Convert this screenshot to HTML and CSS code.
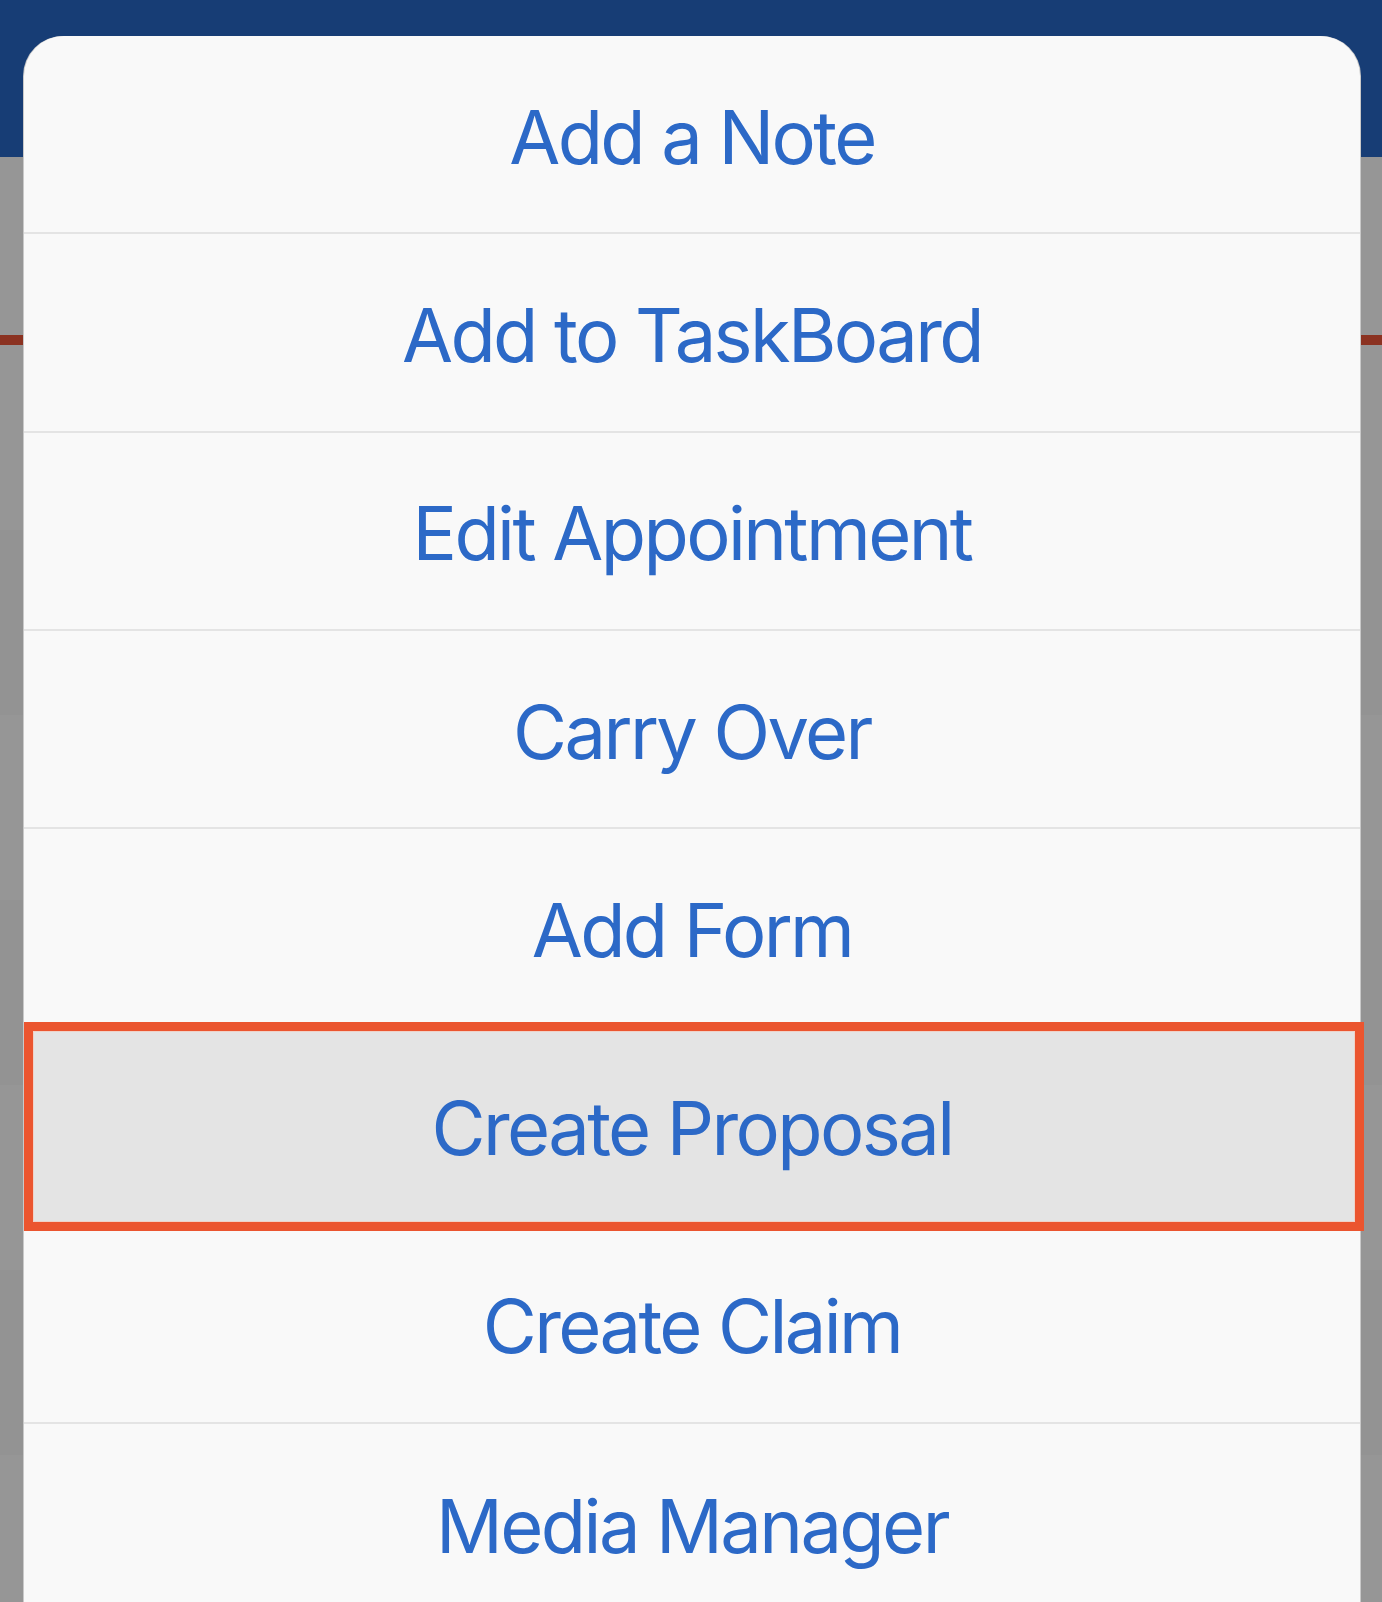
FILE: index.html
```html
<!DOCTYPE html>
<html lang="en">
<head>
<meta charset="utf-8">
<title>Actions</title>
<link rel="stylesheet" href="styles.css">
</head>
<body>
<div class="screen">
  <div class="backdrop">
    <div class="bd-header"></div>
    <div class="bd-bar"></div>
    <div class="bd-accent"></div>
    <div class="bd-row bd-a"></div>
    <div class="bd-row bd-b"></div>
    <div class="bd-row bd-a"></div>
    <div class="bd-row bd-b"></div>
    <div class="bd-row bd-a"></div>
    <div class="bd-row bd-b"></div>
    <div class="bd-row bd-a"></div>
  </div>
  <div class="sheet">
    <div class="action">Add a Note</div>
    <div class="action">Add to TaskBoard</div>
    <div class="action">Edit Appointment</div>
    <div class="action">Carry Over</div>
    <div class="action">Add Form</div>
    <div class="action action-selected"><span class="highlight"></span><span class="label">Create Proposal</span></div>
    <div class="action">Create Claim</div>
    <div class="action">Media Manager</div>
  </div>
</div>
</body>
</html>
```
FILE: styles.css
```css
html, body {
  margin: 0;
  padding: 0;
}
body {
  width: 1382px;
  height: 1602px;
  overflow: hidden;
  background: #959595;
  font-family: "Inter", "Liberation Sans", sans-serif;
}
.screen {
  position: relative;
  width: 1382px;
  height: 1602px;
  overflow: hidden;
}
.backdrop {
  display: flex;
  flex-direction: column;
}
.bd-header {
  height: 157px;
  background: #173d75;
}
.bd-bar {
  height: 178px;
  background: #969696;
}
.bd-accent {
  height: 10px;
  background: #8b3221;
}
.bd-row {
  height: 185px;
}
.bd-a { background: #969696; }
.bd-b { background: #939393; }

.sheet {
  position: absolute;
  top: 36px;
  left: 24px;
  width: 1336px;
  bottom: 0;
  background: #f9f9f9;
  border-radius: 40px 40px 0 0;
  box-shadow: -1px 0 0 #c9c9c9, 1px 0 0 #c9c9c9;
  display: flex;
  flex-direction: column;
}
.action {
  position: relative;
  flex: 0 0 198.3px;
  box-sizing: border-box;
  padding-top: 5px;
  display: flex;
  align-items: center;
  justify-content: center;
  border-bottom: 2px solid #e4e4e4;
  color: #2c69c7;
  font-size: 74px;
  font-weight: 400;
  letter-spacing: -2.6px;
  line-height: 1;
}
.action:last-child {
  border-bottom: none;
}
.action-selected {
  background: #e4e4e4;
}
.action-selected .label {
  position: relative;
}
.highlight {
  position: absolute;
  top: -5px;
  bottom: -7px;
  left: 0;
  right: -4px;
  border: 9px solid #eb552f;
  box-shadow: inset 0 0 0 1px #efd2c8;
}
```
